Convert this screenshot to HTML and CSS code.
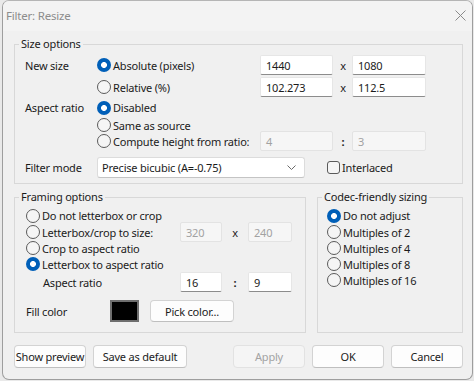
FILE: index.html
```html
<!DOCTYPE html>
<html>
<head>
<meta charset="utf-8">
<link rel="stylesheet" href="styles.css">
</head>
<body>
<div class="window">
  <div class="titlebar">
    <span class="title">Filter: Resize</span>
    <svg class="close" width="11" height="11" viewBox="0 0 11 11"><path d="M0.5 0.5L10.5 10.5M10.5 0.5L0.5 10.5" stroke="#8a8a8a" stroke-width="1" fill="none"/></svg>
  </div>
  <div class="content">
    <fieldset class="group size">
      <legend>Size options</legend>
      <div class="row s1">
        <span class="lbl">New size</span>
        <span class="radio on rcol">Absolute (pixels)</span>
        <span class="edit w73">1440</span><span class="sep">x</span><span class="edit w74">1080</span>
      </div>
      <div class="row s2">
        <span class="lbl"></span>
        <span class="radio rcol">Relative (%)</span>
        <span class="edit w73">102.273</span><span class="sep">x</span><span class="edit w74">112.5</span>
      </div>
      <div class="row s3">
        <span class="lbl">Aspect ratio</span>
        <span class="radio on rcol">Disabled</span>
      </div>
      <div class="row s4">
        <span class="lbl"></span>
        <span class="radio rcol">Same as source</span>
      </div>
      <div class="row s5">
        <span class="lbl"></span>
        <span class="radio rcol">Compute height from ratio:</span>
        <span class="edit w73 dis">4</span><span class="sep colon">:</span><span class="edit w74 dis">3</span>
      </div>
      <div class="row s6">
        <span class="lbl">Filter mode</span>
        <span class="combo">Precise bicubic (A=-0.75)<svg class="chev" width="9" height="5" viewBox="0 0 9 5"><path d="M0.5 0.5L4.5 4.5L8.5 0.5" stroke="#6a6a6a" fill="none"/></svg></span>
        <span class="check">Interlaced</span>
      </div>
    </fieldset>
    <div class="lower">
      <fieldset class="group framing">
        <legend>Framing options</legend>
        <div class="row f1"><span class="radio fcol">Do not letterbox or crop</span></div>
        <div class="row f2"><span class="radio fcol">Letterbox/crop to size:</span><span class="edit w42 dis">320</span><span class="sep2">x</span><span class="edit w44 dis">240</span></div>
        <div class="row f3"><span class="radio fcol">Crop to aspect ratio</span></div>
        <div class="row f4"><span class="radio on fcol">Letterbox to aspect ratio</span></div>
        <div class="row f5"><span class="sublbl">Aspect ratio</span><span class="edit w42">16</span><span class="sep2 colon">:</span><span class="edit w44">9</span></div>
        <div class="row f6"><span class="filllbl">Fill color</span><span class="swatch"></span><span class="btn pick">Pick color...</span></div>
      </fieldset>
      <fieldset class="group codec">
        <legend>Codec-friendly sizing</legend>
        <div class="row f1"><span class="radio on">Do not adjust</span></div>
        <div class="row f2"><span class="radio">Multiples of 2</span></div>
        <div class="row f3"><span class="radio">Multiples of 4</span></div>
        <div class="row f4"><span class="radio">Multiples of 8</span></div>
        <div class="row f4"><span class="radio">Multiples of 16</span></div>
      </fieldset>
    </div>
    <div class="buttons">
      <span class="btn b72">Show preview</span>
      <span class="btn b93">Save as default</span>
      <span class="spacer"></span>
      <span class="btn b71 disabled">Apply</span>
      <span class="btn b72">OK</span>
      <span class="btn b71">Cancel</span>
    </div>
  </div>
</div>
</body>
</html>
```
FILE: styles.css
```css
html, body {
  margin: 0;
  padding: 0;
  background: #e9e9e9;
}
body {
  font-family: "Noto Sans", "Open Sans", sans-serif;
  font-size: 11px;
  letter-spacing: -0.2px;
  color: #1b1b1b;
  width: 474px;
  height: 381px;
  overflow: hidden;
}
.window {
  box-sizing: border-box;
  margin-left: 2px;
  width: 471px;
  height: 380px;
  border: 1px solid #9e9e9e;
  border-top: 1px solid #b5b5b5;
  border-radius: 7px;
  background: #f0f0f0;
  overflow: hidden;
}
.titlebar {
  height: 30px;
  background: #f3f3f3;
  display: flex;
  align-items: center;
  padding: 0 0 2px 3px;
  box-sizing: border-box;
}
.title {
  color: #8c8c8c;
  font-size: 11.5px;
  flex: 1;
}
.close {
  margin-right: 6px;
}
.content {
  padding: 5px 9px 0 11px;
}
.group {
  margin: 0;
  padding: 0 4px;
  border: 1px solid #d8d8d8;
  min-width: 0;
}
legend {
  padding: 0 2px;
  line-height: 16px;
  height: 16px;
}
.row {
  display: flex;
  align-items: center;
  white-space: nowrap;
}
.size { padding-bottom: 5px; }
.size .row { padding-left: 6px; }
.s1 { margin-top: 2px; height: 22px; }
.s2 { height: 22px; }
.s3 { height: 19px; }
.s4 { height: 16px; }
.s5 { height: 16px; }
.s6 { margin-top: 8px; height: 21px; }
.lbl { width: 72px; flex: none; }
.rcol { width: 163px; flex: none; }
.edit {
  box-sizing: border-box;
  height: 20px;
  flex: none;
  background: #ffffff;
  border: 1px solid #e6e6e6;
  border-bottom: 1px solid #8c8c8c;
  border-radius: 2px;
  padding-left: 5px;
  display: flex;
  align-items: center;
}
.edit.dis {
  background: #f6f6f6;
  border-color: #e3e3e3;
  color: #a2a2a2;
}
.w73 { width: 73px; }
.w74 { width: 74px; }
.w42 { width: 42px; }
.w44 { width: 44px; }
.sep { width: 18px; text-align: center; flex: none; padding-left: 1px; }
.sep2 { width: 26px; text-align: center; flex: none; }
.colon { font-weight: bold; }
.radio {
  display: flex;
  align-items: center;
}
.radio::before {
  content: "";
  box-sizing: border-box;
  width: 14px;
  height: 14px;
  border-radius: 50%;
  border: 1px solid #5a5a5a;
  background: #f5f5f5;
  margin-right: 2px;
  flex: none;
}
.radio.on::before {
  border: none;
  background: radial-gradient(circle, #ffffff 0 2.6px, #005fb8 3.3px);
}
.combo {
  box-sizing: border-box;
  width: 208px;
  height: 21px;
  flex: none;
  background: #ffffff;
  border: 1px solid #dcdcdc;
  border-bottom-color: #c4c4c4;
  border-radius: 3px;
  padding: 0 8px 0 4px;
  display: flex;
  align-items: center;
  justify-content: space-between;
}
.check {
  margin-left: 22px;
  display: flex;
  align-items: center;
}
.check::before {
  content: "";
  box-sizing: border-box;
  width: 13px;
  height: 13px;
  border: 1px solid #5a5a5a;
  border-radius: 3px;
  background: #f5f5f5;
  margin-right: 2px;
}
.lower {
  display: flex;
  gap: 11px;
  margin-top: 5px;
  align-items: stretch;
}
.framing { width: 292px; box-sizing: border-box; padding-bottom: 10px; }
.codec { flex: 1; padding-bottom: 10px; }
.framing .row { padding-left: 7px; }
.codec .row { padding-left: 5px; }
.f1 { margin-top: 2px; height: 17px; }
.f2, .f3, .f4 { height: 16px; }
.f5 { height: 20px; }
.f6 { margin-top: 8px; height: 22px; }
.fcol { width: 154px; flex: none; }
.sublbl { width: 137px; padding-left: 17px; flex: none; }
.filllbl { width: 84px; flex: none; }
.swatch {
  box-sizing: border-box;
  width: 29px;
  height: 22px;
  background: #000;
  border: 2px solid #6e6e6e;
  flex: none;
}
.btn {
  box-sizing: border-box;
  height: 23px;
  background: #fdfdfd;
  border: 1px solid #d3d3d3;
  border-bottom-color: #bfbfbf;
  border-radius: 4px;
  display: flex;
  align-items: center;
  justify-content: center;
  flex: none;
  white-space: nowrap;
}
.btn.disabled {
  background: #f5f5f5;
  border-color: #e2e2e2;
  color: #a3a3a3;
}
.pick { width: 84px; margin-left: 11px; height: 22px; }
.buttons {
  display: flex;
  gap: 7px;
  margin-top: 12px;
}
.spacer { flex: 1; }
.b72 { width: 72px; }
.b93 { width: 94px; }
.b71 { width: 72px; }
```
